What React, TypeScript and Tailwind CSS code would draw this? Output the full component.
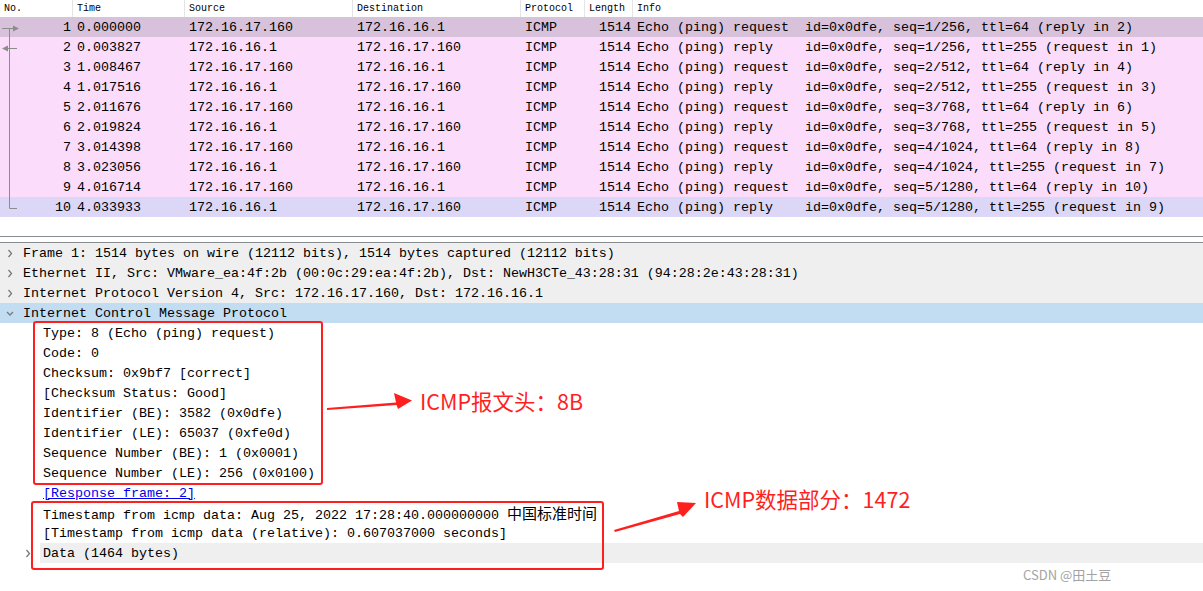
const mono = { fontFamily: '"Liberation Mono", "Noto Sans CJK SC", monospace' };
const cjk = { fontFamily: '"Noto Sans CJK SC", "Noto Sans", sans-serif' };

type Pkt = { no: number; time: string; src: string; dst: string; info: string; bg: string };

const A = "172.16.17.160";
const B = "172.16.16.1";

const packets: Pkt[] = [
  { no: 1, time: "0.000000", src: A, dst: B, info: "Echo (ping) request  id=0x0dfe, seq=1/256, ttl=64 (reply in 2)", bg: "bg-[#d8c1da]" },
  { no: 2, time: "0.003827", src: B, dst: A, info: "Echo (ping) reply    id=0x0dfe, seq=1/256, ttl=255 (request in 1)", bg: "bg-[#fbdcfb]" },
  { no: 3, time: "1.008467", src: A, dst: B, info: "Echo (ping) request  id=0x0dfe, seq=2/512, ttl=64 (reply in 4)", bg: "bg-[#fbdcfb]" },
  { no: 4, time: "1.017516", src: B, dst: A, info: "Echo (ping) reply    id=0x0dfe, seq=2/512, ttl=255 (request in 3)", bg: "bg-[#fbdcfb]" },
  { no: 5, time: "2.011676", src: A, dst: B, info: "Echo (ping) request  id=0x0dfe, seq=3/768, ttl=64 (reply in 6)", bg: "bg-[#fbdcfb]" },
  { no: 6, time: "2.019824", src: B, dst: A, info: "Echo (ping) reply    id=0x0dfe, seq=3/768, ttl=255 (request in 5)", bg: "bg-[#fbdcfb]" },
  { no: 7, time: "3.014398", src: A, dst: B, info: "Echo (ping) request  id=0x0dfe, seq=4/1024, ttl=64 (reply in 8)", bg: "bg-[#fbdcfb]" },
  { no: 8, time: "3.023056", src: B, dst: A, info: "Echo (ping) reply    id=0x0dfe, seq=4/1024, ttl=255 (request in 7)", bg: "bg-[#fbdcfb]" },
  { no: 9, time: "4.016714", src: A, dst: B, info: "Echo (ping) request  id=0x0dfe, seq=5/1280, ttl=64 (reply in 10)", bg: "bg-[#fbdcfb]" },
  { no: 10, time: "4.033933", src: B, dst: A, info: "Echo (ping) reply    id=0x0dfe, seq=5/1280, ttl=255 (request in 9)", bg: "bg-[#ddd7f7]" },
];

function Chevron({ open }: { open?: boolean }) {
  return (
    <svg width="8" height="9" viewBox="0 0 8 9" className="shrink-0">
      {open ? (
        <polyline points="1,3 4,6 7,3" fill="none" stroke="#7a7a7a" strokeWidth="1.3" />
      ) : (
        <polyline points="2.5,1 5.5,4.5 2.5,8" fill="none" stroke="#7a7a7a" strokeWidth="1.3" />
      )}
    </svg>
  );
}

function HeaderCell({ w, label, last }: { w: string; label: string; last?: boolean }) {
  return (
    <div className={`${w} h-full flex items-center pl-[4px] ${last ? "" : "border-r border-[#e4e4e4]"}`}>
      {label}
    </div>
  );
}

function TreeRow({ children, bg = "", indent = false, chevron, open }: { children: React.ReactNode; bg?: string; indent?: boolean; chevron?: boolean; open?: boolean }) {
  return (
    <div className={`h-[20px] flex items-center whitespace-pre ${bg}`}>
      <div className={`${indent ? "w-[43px] pl-[25px]" : "w-[23px] pl-[6px]"} flex items-center`}>
        {chevron ? <Chevron open={open} /> : null}
      </div>
      <div className="pt-[2px]">{children}</div>
    </div>
  );
}

export default function App() {
  return (
    <div className="relative w-[1203px] h-[591px] bg-white overflow-hidden text-black" style={mono}>
      {/* packet list */}
      <div className="h-[17px] flex text-[10px] bg-white">
        <HeaderCell w="w-[73px]" label="No." />
        <HeaderCell w="w-[112px]" label="Time" />
        <HeaderCell w="w-[168px]" label="Source" />
        <HeaderCell w="w-[168px]" label="Destination" />
        <HeaderCell w="w-[64px]" label="Protocol" />
        <HeaderCell w="w-[48px]" label="Length" />
        <HeaderCell w="flex-1" label="Info" last />
      </div>
      <div className="relative text-[13.33px]">
        {packets.map((p) => (
          <div key={p.no} className={`h-[20px] flex items-center pt-[1px] whitespace-pre ${p.bg}`}>
            <div className="w-[73px] text-right pr-[2px]">{p.no}</div>
            <div className="w-[112px] pl-[4px]">{p.time}</div>
            <div className="w-[168px] pl-[4px]">{p.src}</div>
            <div className="w-[168px] pl-[4px]">{p.dst}</div>
            <div className="w-[64px] pl-[4px]">ICMP</div>
            <div className="w-[48px] text-right pr-[2px]">1514</div>
            <div className="flex-1 pl-[4px]">{p.info}</div>
          </div>
        ))}
        <svg className="absolute left-0 top-0" width="24" height="200" viewBox="0 0 24 200">
          <g stroke="#8c8c8c" strokeWidth="1" fill="none">
            <line x1="2" y1="11.5" x2="15" y2="11.5" />
            <line x1="9.5" y1="11.5" x2="9.5" y2="191.5" />
            <line x1="9.5" y1="191.5" x2="17" y2="191.5" />
            <line x1="5" y1="31.5" x2="17" y2="31.5" />
          </g>
          <polygon points="13,8.5 19,11.5 13,14.5" fill="#8c8c8c" />
          <polygon points="8,28.5 2,31.5 8,34.5" fill="#8c8c8c" />
        </svg>
      </div>

      {/* splitter */}
      <div className="h-[19px]" />
      <div className="h-[1px] bg-[#878c91]" />
      <div className="h-[5px] bg-white" />
      <div className="h-[1px] bg-[#878c91]" />

      {/* packet details */}
      <div className="text-[13.33px]">
        <TreeRow bg="bg-[#efefef]" chevron>
          Frame 1: 1514 bytes on wire (12112 bits), 1514 bytes captured (12112 bits)
        </TreeRow>
        <TreeRow bg="bg-[#efefef]" chevron>
          Ethernet II, Src: VMware_ea:4f:2b (00:0c:29:ea:4f:2b), Dst: NewH3CTe_43:28:31 (94:28:2e:43:28:31)
        </TreeRow>
        <TreeRow bg="bg-[#efefef]" chevron>
          Internet Protocol Version 4, Src: 172.16.17.160, Dst: 172.16.16.1
        </TreeRow>
        <TreeRow bg="bg-[#c2dcf2]" chevron open>
          Internet Control Message Protocol
        </TreeRow>
        <TreeRow indent>Type: 8 (Echo (ping) request)</TreeRow>
        <TreeRow indent>Code: 0</TreeRow>
        <TreeRow indent>Checksum: 0x9bf7 [correct]</TreeRow>
        <TreeRow indent>[Checksum Status: Good]</TreeRow>
        <TreeRow indent>Identifier (BE): 3582 (0x0dfe)</TreeRow>
        <TreeRow indent>Identifier (LE): 65037 (0xfe0d)</TreeRow>
        <TreeRow indent>Sequence Number (BE): 1 (0x0001)</TreeRow>
        <TreeRow indent>Sequence Number (LE): 256 (0x0100)</TreeRow>
        <TreeRow indent>
          <span className="text-[#0000ee] underline">[Response frame: 2]</span>
        </TreeRow>
        <TreeRow indent>
          Timestamp from icmp data: Aug 25, 2022 17:28:40.000000000{" "}
          <span className="text-[15px]" style={cjk}>中国标准时间</span>
        </TreeRow>
        <TreeRow indent>[Timestamp from icmp data (relative): 0.607037000 seconds]</TreeRow>
        <div className="h-[20px] flex items-center whitespace-pre">
          <div className="w-[40px] pl-[24px] flex items-center">
            <Chevron />
          </div>
          <div className="flex-1 h-full flex items-center pt-[2px] pl-[3px] bg-[#efefef]">Data (1464 bytes)</div>
        </div>
      </div>

      {/* annotations */}
      <div className="absolute left-[33px] top-[321px] w-[290px] h-[164px] border-2 border-[#ff1f1f] rounded-[3px]" />
      <div className="absolute left-[31px] top-[501px] w-[573px] h-[69px] border-2 border-[#ff1f1f] rounded-[3px]" />
      <svg className="absolute left-0 top-0 pointer-events-none" width="1203" height="591" viewBox="0 0 1203 591">
        <polygon points="327,408 396,402.5 394,393 412,400.5 398,409 396.5,405 327,410" fill="#ff1f1f" />
        <polygon points="614,530 679,511 677,502 696,503 683,517 680,514 615,532" fill="#ff1f1f" />
      </svg>
      <div className="absolute left-[420px] top-[386px] text-[21.5px] leading-[30px] text-[#ff1f1f] whitespace-pre" style={cjk}>
        ICMP报文头：8B
      </div>
      <div className="absolute left-[704px] top-[484px] text-[21.5px] leading-[30px] text-[#ff1f1f] whitespace-pre" style={cjk}>
        ICMP数据部分：1472
      </div>
      <div className="absolute left-[1023px] top-[566px] text-[13px] leading-[18px] text-[#a3a3a3] whitespace-pre" style={cjk}>
        CSDN @田土豆
      </div>
    </div>
  );
}
